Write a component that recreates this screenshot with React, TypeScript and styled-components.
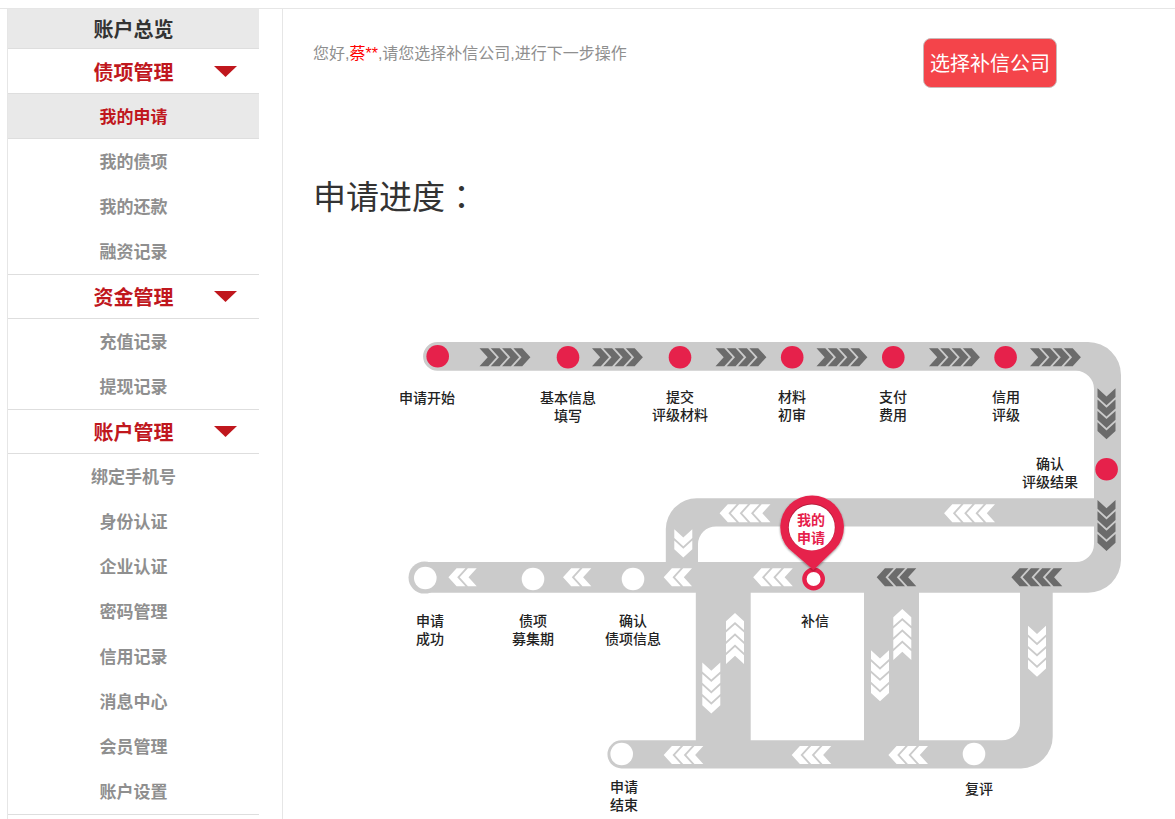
import React, { useState } from "react";
import styled, { createGlobalStyle } from "styled-components";

const colors = {
  line: "#e6e6e6",
  rule: "#dedede",
  shade: "#e9e9e9",
  red: "#c0171d",
  text: "#333333",
  muted: "#8f8f8f",
  road: "#cbcbcb",
  pink: "#e6214b",
  done: "#6b6b6b",
};

const GlobalStyle = createGlobalStyle`
  *, *::before, *::after { box-sizing: border-box; }
  body {
    margin: 0;
    background: #fff;
    color: ${colors.text};
    font-family: "Liberation Sans", "Noto Sans CJK SC", sans-serif;
  }
`;

const Page = styled.div`
  padding-top: 8px;
  min-height: 100vh;
  display: flex;
`;

const Frame = styled.div`
  flex: 1;
  display: flex;
  border-top: 1px solid ${colors.line};
  padding-left: 7px;
`;

const Sidebar = styled.nav`
  flex: none;
  width: 276px;
  padding-right: 23px;
  border: solid ${colors.line};
  border-width: 0 1px;
`;

const Overview = styled.a`
  display: block;
  height: 40px;
  padding-top: 1px;
  line-height: 40px;
  border-bottom: 1px solid ${colors.rule};
  background: ${colors.shade};
  color: ${colors.text};
  font-size: 20px;
  font-weight: 700;
  text-align: center;
  text-decoration: none;
`;

const Group = styled.section`
  border-bottom: 1px solid ${colors.rule};
  margin-bottom: -1px;
`;

const GroupHead = styled.button`
  display: grid;
  grid-template-columns: 1fr auto 1fr;
  align-items: center;
  width: 100%;
  height: 45px;
  padding: 1px 0 0;
  border: 0;
  border-bottom: 1px solid ${colors.rule};
  background: none;
  color: ${colors.red};
  font: inherit;
  font-size: 20px;
  font-weight: 700;
  cursor: pointer;
`;

const GroupName = styled.span`
  grid-column: 2;
`;

const Arrow = styled.svg<{ $open: boolean }>`
  justify-self: end;
  margin-right: 22px;
  transform: ${(p) => (p.$open ? "none" : "rotate(180deg)")};
`;

const Items = styled.ul`
  margin: 0;
  padding: 0;
  list-style: none;
`;

const ItemLink = styled.a<{ $active: boolean }>`
  display: block;
  height: 45px;
  padding-top: 2px;
  line-height: 43px;
  border-bottom: 1px solid ${(p) => (p.$active ? colors.rule : "transparent")};
  background: ${(p) => (p.$active ? colors.shade : "transparent")};
  color: ${(p) => (p.$active ? colors.red : colors.muted)};
  font-size: 17px;
  font-weight: 700;
  text-align: center;
  text-decoration: none;
`;

const Main = styled.main`
  flex: 1;
  min-width: 0;
  padding: 29px 30px 0;
`;

const TopBar = styled.header`
  display: flex;
  justify-content: space-between;
  align-items: flex-start;
  padding-right: 88px;
`;

const Greeting = styled.p`
  margin: 0;
  font-size: 16px;
  line-height: 32px;
  color: ${colors.muted};
`;

const UserName = styled.span`
  color: #ff0000;
`;

const ChooseButton = styled.button`
  height: 50px;
  padding: 0 6px 2px;
  border: 1px solid #c9b9b9;
  border-radius: 8px;
  background: #f4444a;
  color: #fff;
  font: inherit;
  font-size: 20px;
  cursor: pointer;
`;

const Title = styled.h1`
  margin: 86px 0 0;
  font-size: 33px;
  line-height: 48px;
  font-weight: 400;
`;

const Colon = styled.span`
  font-family: "Noto Sans CJK TC", sans-serif;
  line-height: 1;
`;

const Diagram = styled.svg`
  display: block;
  width: 730px;
  max-width: 100%;
  height: auto;
  margin: 108px auto 0 87px;
`;

const Label = styled.text<{ $pin?: boolean }>`
  font-size: 14px;
  font-weight: ${(p) => (p.$pin ? 700 : 500)};
  text-anchor: middle;
  fill: ${(p) => (p.$pin ? colors.pink : "#222")};
`;

const groups = [
  { name: "债项管理", items: ["我的申请", "我的债项", "我的还款", "融资记录"] },
  { name: "资金管理", items: ["充值记录", "提现记录"] },
  {
    name: "账户管理",
    items: [
      "绑定手机号",
      "身份认证",
      "企业认证",
      "密码管理",
      "信用记录",
      "消息中心",
      "会员管理",
      "账户设置",
    ],
  },
];

function MenuGroup({ name, items, active }: { name: string; items: string[]; active: string }) {
  const [open, setOpen] = useState(true);
  return (
    <Group>
      <GroupHead type="button" aria-expanded={open} onClick={() => setOpen(!open)}>
        <GroupName>{name}</GroupName>
        <Arrow $open={open} width="23" height="11" viewBox="0 0 23 11" aria-hidden="true">
          <path d="M0 0H23L11.5 11Z" fill={colors.red} />
        </Arrow>
      </GroupHead>
      {open && (
        <Items>
          {items.map((item) => (
            <li key={item}>
              <ItemLink href="#" $active={item === active}>
                {item}
              </ItemLink>
            </li>
          ))}
        </Items>
      )}
    </Group>
  );
}

type Direction = "right" | "down" | "left" | "up";

/* x and y give the middle of the tail edge; the row of chevrons runs from there. */
type Run = { x: number; y: number; dir: Direction; count: number; done?: boolean };

const angle: Record<Direction, number> = { right: 0, down: 90, left: 180, up: 270 };

function Chevrons({ x, y, dir, count, done }: Run) {
  return (
    <g transform={`translate(${x} ${y}) rotate(${angle[dir]})`} fill={done ? colors.done : "#fff"}>
      {Array.from({ length: count }, (_, i) => (
        <path key={i} transform={`translate(${i * 11.3} 0)`} d="M0-9H8.8L17 0L8.8 9H0L8.2 0Z" />
      ))}
    </g>
  );
}

const runs: Run[] = [
  ...[79.5, 192, 315.5, 416.5, 529, 630].map(
    (x): Run => ({ x, y: 27.2, dir: "right", count: 4, done: true })
  ),
  { x: 706.5, y: 58.3, dir: "down", count: 4, done: true },
  { x: 706.5, y: 170, dir: "down", count: 4, done: true },
  { x: 595, y: 183.2, dir: "left", count: 4 },
  { x: 370.5, y: 183.2, dir: "left", count: 4 },
  { x: 283.3, y: 199.2, dir: "down", count: 2 },
  { x: 76.7, y: 247.2, dir: "left", count: 2 },
  { x: 191.3, y: 247.2, dir: "left", count: 2 },
  { x: 292, y: 247.2, dir: "left", count: 2 },
  { x: 392.8, y: 247.2, dir: "left", count: 3 },
  { x: 516.3, y: 247.2, dir: "left", count: 3, done: true },
  { x: 662.3, y: 247.2, dir: "left", count: 4, done: true },
  { x: 335, y: 334, dir: "up", count: 4 },
  { x: 311.3, y: 332.6, dir: "down", count: 4 },
  { x: 502.3, y: 330, dir: "up", count: 4 },
  { x: 480, y: 320.3, dir: "down", count: 4 },
  { x: 637, y: 295.8, dir: "down", count: 4 },
  { x: 303.3, y: 425, dir: "left", count: 3 },
  { x: 431.3, y: 425, dir: "left", count: 3 },
  { x: 528, y: 425, dir: "left", count: 3 },
];

type Stop = { cx: number; cy: number; tx: number; ty: number; lines: string[]; done?: boolean };

const stops: Stop[] = [
  { cx: 37.7, cy: 26.3, tx: 27, ty: 73, lines: ["申请开始"], done: true },
  { cx: 168, cy: 27.3, tx: 168, ty: 73, lines: ["基本信息", "填写"], done: true },
  { cx: 280, cy: 27.3, tx: 280, ty: 72, lines: ["提交", "评级材料"], done: true },
  { cx: 392.2, cy: 27.3, tx: 392, ty: 72, lines: ["材料", "初审"], done: true },
  { cx: 493.3, cy: 27.3, tx: 493, ty: 72, lines: ["支付", "费用"], done: true },
  { cx: 605.6, cy: 27.3, tx: 606, ty: 72, lines: ["信用", "评级"], done: true },
  { cx: 706.6, cy: 139.3, tx: 650, ty: 139, lines: ["确认", "评级结果"], done: true },
  { cx: 25.3, cy: 248, tx: 30, ty: 296, lines: ["申请", "成功"] },
  { cx: 133, cy: 249, tx: 133, ty: 296, lines: ["债项", "募集期"] },
  { cx: 233, cy: 249, tx: 233, ty: 296, lines: ["确认", "债项信息"] },
  { cx: 221.7, cy: 424, tx: 224, ty: 462, lines: ["申请", "结束"] },
  { cx: 574, cy: 424, tx: 579, ty: 464, lines: ["复评"] },
];

function ProgressDiagram() {
  return (
    <Diagram viewBox="0 0 730 484" role="img" aria-label="申请进度">
      <defs>
        <filter id="pinShadow" x="-20%" y="-20%" width="140%" height="140%">
          <feDropShadow dx="0" dy="1" stdDeviation="1" floodColor="#000" floodOpacity="0.45" />
        </filter>
      </defs>
      <g fill={colors.road}>
        <path d="M37.5 12H688A33 33 0 0 1 721 45V230A33 33 0 0 1 688 262.7H24V232H676A18 18 0 0 0 694 214V59A18 18 0 0 0 676 40.8H37.5A14.4 14.4 0 0 1 37.5 12Z" />
        <circle cx="24.5" cy="247.6" r="16" />
        <path d="M700 168.3H297A31 31 0 0 0 265.8 199V235H298V214A18 18 0 0 1 316 196.4H700Z" />
        <path d="M295.8 260H350.7V412H295.8Z" />
        <path d="M464 260H519V412H464Z" />
        <path d="M221.5 410.3H602A18 18 0 0 0 620 392V260H652.7V406A32 32 0 0 1 621 438.4H221.5A14 14 0 0 1 221.5 410.3Z" />
      </g>
      {runs.map((run) => (
        <Chevrons key={`${run.x}-${run.y}`} {...run} />
      ))}
      {stops.map((s) => (
        <g key={s.lines.join("")}>
          <circle cx={s.cx} cy={s.cy} r="11.3" fill={s.done ? colors.pink : "#fff"} />
          {s.lines.map((line, i) => (
            <Label key={line} x={s.tx} y={s.ty + i * 18}>
              {line}
            </Label>
          ))}
        </g>
      ))}
      <Label x={415} y={296}>
        补信
      </Label>
      <circle cx="413.6" cy="249" r="9.2" fill="#fff" stroke={colors.pink} strokeWidth="4.4" />
      <path
        filter="url(#pinShadow)"
        fill={colors.pink}
        d="M413.5 240L388.6 218.6A31.8 31.8 0 1 1 435.6 218.6Z"
      />
      <circle cx="411.8" cy="197" r="23.6" fill="#8f1730" opacity="0.55" />
      <circle cx="411.8" cy="197.4" r="23" fill="#fff" />
      <Label $pin x={411} y={195}>
        我的
      </Label>
      <Label $pin x={411} y={213}>
        申请
      </Label>
    </Diagram>
  );
}

export default function App() {
  return (
    <>
      <GlobalStyle />
      <Page>
        <Frame>
          <Sidebar>
            <Overview href="#">账户总览</Overview>
            {groups.map((g) => (
              <MenuGroup key={g.name} name={g.name} items={g.items} active="我的申请" />
            ))}
          </Sidebar>
          <Main>
            <TopBar>
              <Greeting>
                您好,<UserName>蔡**</UserName>,请您选择补信公司,进行下一步操作
              </Greeting>
              <ChooseButton type="button">选择补信公司</ChooseButton>
            </TopBar>
            <Title>
              申请进度<Colon>：</Colon>
            </Title>
            <ProgressDiagram />
          </Main>
        </Frame>
      </Page>
    </>
  );
}
